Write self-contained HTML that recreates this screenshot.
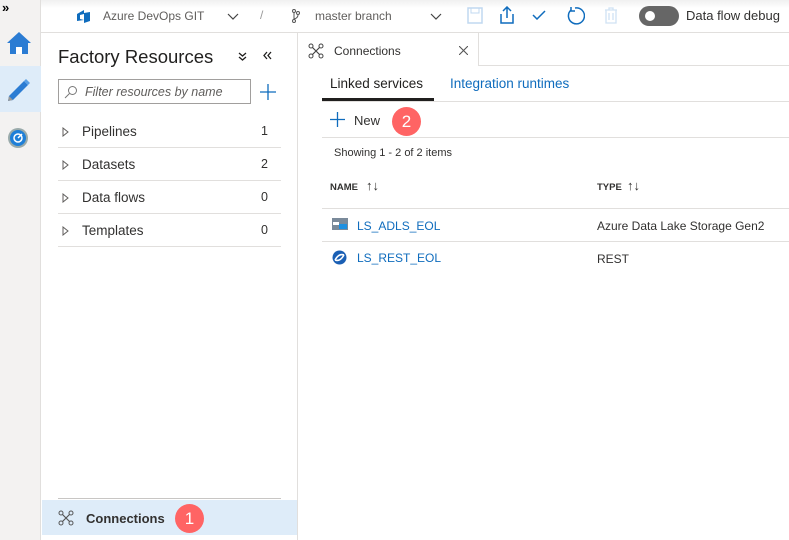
<!DOCTYPE html>
<html><head><meta charset="utf-8"><style>
*{box-sizing:border-box;margin:0;padding:0}
body{width:789px;height:540px;overflow:hidden;background:#fff;font-family:"Liberation Sans",sans-serif;color:#323130;position:relative}
.a{position:absolute}
.rail{left:0;top:0;width:41px;height:540px;background:#f3f2f1;border-right:1px solid #e1dfdd}
.top{left:41px;top:0;width:748px;height:33px;background:linear-gradient(#f0f0f0,#fff 8px);border-bottom:1px solid #e1dfdd;font-size:12px;color:#605e5c}
.side{left:42px;top:33px;width:256px;height:507px;border-right:1px solid #e1dfdd}
.row{position:absolute;left:16px;width:223px;height:33px;border-bottom:1px solid #e1dfdd;font-size:13.5px;color:#323130}
.row .t{position:absolute;left:24px;top:9px}
.row .n{position:absolute;right:13px;top:9px;font-size:12.5px}
.row svg{position:absolute;left:4px;top:12px}
.badge{width:29px;height:29px;border-radius:50%;background:#ff6464;color:#fff;font-size:17px;text-align:center;line-height:29px}
.link{color:#0f6cbd;font-size:12px}
</style></head><body>
<div class="a rail">
 <div class="a" style="left:2px;top:0;font-size:13px;color:#000;font-weight:bold">»</div>
 <svg class="a" style="left:6px;top:31px" width="26" height="24" viewBox="0 0 26 24"><path d="M13 1 L1 12 H4 V23 H10 V16 H16 V23 H22 V12 H25 Z" fill="#2b7cd3"/><rect x="10" y="16" width="6" height="7" fill="#fff"/></svg>
 <div class="a" style="left:0;top:66px;width:41px;height:46px;background:#deecf9"></div>
 <svg class="a" style="left:6px;top:76px" width="26" height="26" viewBox="0 0 26 26"><path d="M3 20 L18 5 L22 9 L7 24 L2 25 Z" fill="#2b7cd3"/><path d="M18 5 L20 3 L24 7 L22 9Z" fill="#5aa0e6"/><path d="M3 20 L7 24 L2 25Z" fill="#999"/></svg>
 <svg class="a" style="left:7px;top:127px" width="22" height="22" viewBox="0 0 22 22"><circle cx="11" cy="11" r="10" fill="#9aa"/><circle cx="11" cy="11" r="8" fill="#1e7fd8"/><circle cx="11" cy="11" r="4" fill="none" stroke="#fff" stroke-width="1.5"/><path d="M11 11 L15 7" stroke="#fff" stroke-width="1.5"/></svg>
</div>
<div class="a top">
 <svg class="a" style="left:35px;top:9px" width="16" height="15" viewBox="0 0 16 15"><path d="M1 5 L8 1 V4 L14 3 V12 L8 14 V11 L1 12 Z M4 6 V10 L8 11 V5 Z" fill="#0f6cbd"/></svg>
 <div class="a" style="left:62px;top:9px">Azure DevOps GIT</div>
 <svg class="a" style="left:186px;top:13px" width="12" height="8"><path d="M1 1 L6 6 L11 1" fill="none" stroke="#444" stroke-width="1.2"/></svg>
 <div class="a" style="left:219px;top:8px;color:#999">/</div>
 <svg class="a" style="left:251px;top:9px" width="8" height="14"><circle cx="2" cy="2" r="1.5" fill="none" stroke="#555"/><circle cx="6" cy="4" r="1.5" fill="none" stroke="#555"/><circle cx="2" cy="12" r="1.5" fill="none" stroke="#555"/><path d="M2 4 V10 M6 6 Q6 9 2 10" fill="none" stroke="#555"/></svg>
 <div class="a" style="left:274px;top:9px">master branch</div>
 <svg class="a" style="left:389px;top:13px" width="12" height="8"><path d="M1 1 L6 6 L11 1" fill="none" stroke="#444" stroke-width="1.2"/></svg>
 <svg class="a" style="left:426px;top:7px" width="16" height="17"><rect x="1" y="1" width="14" height="15" fill="none" stroke="#c0d8f0" stroke-width="1.5"/><rect x="4" y="1" width="8" height="5" fill="none" stroke="#c0d8f0"/></svg>
 <svg class="a" style="left:458px;top:6px" width="16" height="18"><path d="M8 1 V12 M4 5 L8 1 L12 5 M2 8 V17 H14 V8" fill="none" stroke="#0f6cbd" stroke-width="1.5"/></svg>
 <svg class="a" style="left:491px;top:10px" width="14" height="10"><path d="M1 5 L5 9 L13 1" fill="none" stroke="#0f6cbd" stroke-width="1.5"/></svg>
 <svg class="a" style="left:524px;top:6px" width="20" height="20"><path d="M6 4 A8 8 0 1 0 10 2" fill="none" stroke="#0f6cbd" stroke-width="1.5"/><path d="M6 1 V5 H10" fill="none" stroke="#0f6cbd" stroke-width="1.5"/></svg>
 <svg class="a" style="left:563px;top:7px" width="14" height="17"><path d="M1 3 H13 M5 3 V1 H9 V3 M2 3 V16 H12 V3 M5 6 V13 M9 6 V13" fill="none" stroke="#d0e2f3" stroke-width="1.3"/></svg>
 <div class="a" style="left:598px;top:6px;width:40px;height:20px;border-radius:10px;background:#666"></div>
 <div class="a" style="left:604px;top:11px;width:10px;height:10px;border-radius:50%;background:#fff"></div>
 <div class="a" style="left:645px;top:8px;font-size:13px;color:#323130">Data flow debug</div>
</div>
<div class="a side">
 <div class="a" style="left:16px;top:13px;font-size:18.5px;color:#201f1e">Factory Resources</div>
 <svg class="a" style="left:196px;top:19px" width="9" height="10"><path d="M1 1 L4.5 4 L8 1 M1 5 L4.5 8 L8 5" fill="none" stroke="#201f1e" stroke-width="1.3"/></svg>
 <svg class="a" style="left:221px;top:18px" width="10" height="9"><path d="M4 1 L1 4.5 L4 8 M8 1 L5 4.5 L8 8" fill="none" stroke="#201f1e" stroke-width="1.3"/></svg>
 <div class="a" style="left:16px;top:46px;width:193px;height:25px;border:1px solid #a19f9d"></div>
 <svg class="a" style="left:22px;top:52px" width="14" height="14"><circle cx="8.5" cy="5.5" r="4" fill="none" stroke="#777"/><path d="M5.5 8.5 L1 13" stroke="#777"/></svg>
 <div class="a" style="left:43px;top:52px;font-size:12.5px;font-style:italic;color:#605e5c">Filter resources by name</div>
 <svg class="a" style="left:218px;top:51px" width="16" height="16"><path d="M8 0 V16 M0 8 H16" stroke="#0f6cbd" stroke-width="1.3"/></svg>
 <div class="row" style="top:82px"><svg width="7" height="10"><path d="M1 1 L6 5 L1 9 Z" fill="none" stroke="#605e5c"/></svg><span class="t">Pipelines</span><span class="n">1</span></div>
 <div class="row" style="top:115px"><svg width="7" height="10"><path d="M1 1 L6 5 L1 9 Z" fill="none" stroke="#605e5c"/></svg><span class="t">Datasets</span><span class="n">2</span></div>
 <div class="row" style="top:148px"><svg width="7" height="10"><path d="M1 1 L6 5 L1 9 Z" fill="none" stroke="#605e5c"/></svg><span class="t">Data flows</span><span class="n">0</span></div>
 <div class="row" style="top:181px"><svg width="7" height="10"><path d="M1 1 L6 5 L1 9 Z" fill="none" stroke="#605e5c"/></svg><span class="t">Templates</span><span class="n">0</span></div>
 <div class="a" style="left:16px;top:465px;width:223px;border-top:1px solid #c8c6c4"></div>
 <div class="a" style="left:0;top:467px;width:255px;height:35px;background:#deecf9"></div>
 <svg class="a" style="left:16px;top:477px" width="16" height="16"><path d="M3 3 L13 13 M13 3 L3 13" stroke="#555" stroke-width="1.2"/><circle cx="3" cy="3" r="2" fill="#deecf9" stroke="#555"/><circle cx="13" cy="3" r="2" fill="#deecf9" stroke="#555"/><circle cx="3" cy="13" r="2" fill="#deecf9" stroke="#555"/><circle cx="13" cy="13" r="2" fill="#deecf9" stroke="#555"/></svg>
 <div class="a" style="left:44px;top:478px;font-size:13px;font-weight:bold;color:#323130">Connections</div>
 <div class="a badge" style="left:133px;top:471px">1</div>
</div>
<div class="a" style="left:298px;top:33px;width:181px;height:33px;border-right:1px solid #e1dfdd;background:#fff"></div>
<div class="a" style="left:479px;top:65px;width:310px;border-top:1px solid #e1dfdd"></div>
<svg class="a" style="left:308px;top:43px" width="16" height="16"><path d="M3 3 L13 13 M13 3 L3 13" stroke="#444" stroke-width="1.2"/><circle cx="3" cy="3" r="2" fill="#fff" stroke="#444"/><circle cx="13" cy="3" r="2" fill="#fff" stroke="#444"/><circle cx="3" cy="13" r="2" fill="#fff" stroke="#444"/><circle cx="13" cy="13" r="2" fill="#fff" stroke="#444"/></svg>
<div class="a" style="left:334px;top:44px;font-size:12px">Connections</div>
<svg class="a" style="left:459px;top:46px" width="9" height="9"><path d="M0 0 L9 9 M9 0 L0 9" stroke="#555" stroke-width="1.1"/></svg>
<div class="a" style="left:330px;top:76px;font-size:13.5px;color:#201f1e">Linked services</div>
<div class="a" style="left:322px;top:98px;width:112px;height:3px;background:#201f1e"></div>
<div class="a" style="left:450px;top:76px;font-size:13.5px;color:#0f6cbd">Integration runtimes</div>
<div class="a" style="left:322px;top:101px;width:467px;border-top:1px solid #e1dfdd"></div>
<svg class="a" style="left:330px;top:112px" width="15" height="15"><path d="M7.5 0 V15 M0 7.5 H15" stroke="#0f6cbd" stroke-width="1.3"/></svg>
<div class="a" style="left:354px;top:113px;font-size:13px">New</div>
<div class="a badge" style="left:392px;top:107px">2</div>
<div class="a" style="left:322px;top:137px;width:467px;border-top:1px solid #e1dfdd"></div>
<div class="a" style="left:334px;top:147px;font-size:11px">Showing 1 - 2 of 2 items</div>
<div class="a" style="left:330px;top:182px;font-size:9.5px;font-weight:bold;color:#323130">NAME</div>
<div class="a" style="left:366px;top:178px;font-size:13px;color:#323130">↑↓</div>
<div class="a" style="left:597px;top:182px;font-size:9.5px;font-weight:bold;color:#323130">TYPE</div>
<div class="a" style="left:627px;top:178px;font-size:13px;color:#323130">↑↓</div>
<div class="a" style="left:322px;top:208px;width:467px;border-top:1px solid #e1dfdd"></div>
<svg class="a" style="left:332px;top:218px" width="16" height="12"><rect width="16" height="12" fill="#7a8a9a"/><rect x="1" y="4" width="6" height="3" fill="#fff"/><rect x="7" y="6" width="8" height="5" fill="#1e90e0"/></svg>
<div class="a link" style="left:357px;top:219px">LS_ADLS_EOL</div>
<div class="a" style="left:597px;top:219px;font-size:12px">Azure Data Lake Storage Gen2</div>
<div class="a" style="left:322px;top:241px;width:467px;border-top:1px solid #e1dfdd"></div>
<svg class="a" style="left:332px;top:250px" width="15" height="15"><circle cx="7.5" cy="7.5" r="7" fill="#1a5fb4"/><path d="M3 10 Q7 3 12 5 M3 10 Q8 12 12 5" stroke="#fff" stroke-width="1.5" fill="none"/></svg>
<div class="a link" style="left:357px;top:251px">LS_REST_EOL</div>
<div class="a" style="left:597px;top:252px;font-size:12px">REST</div>
</body></html>
